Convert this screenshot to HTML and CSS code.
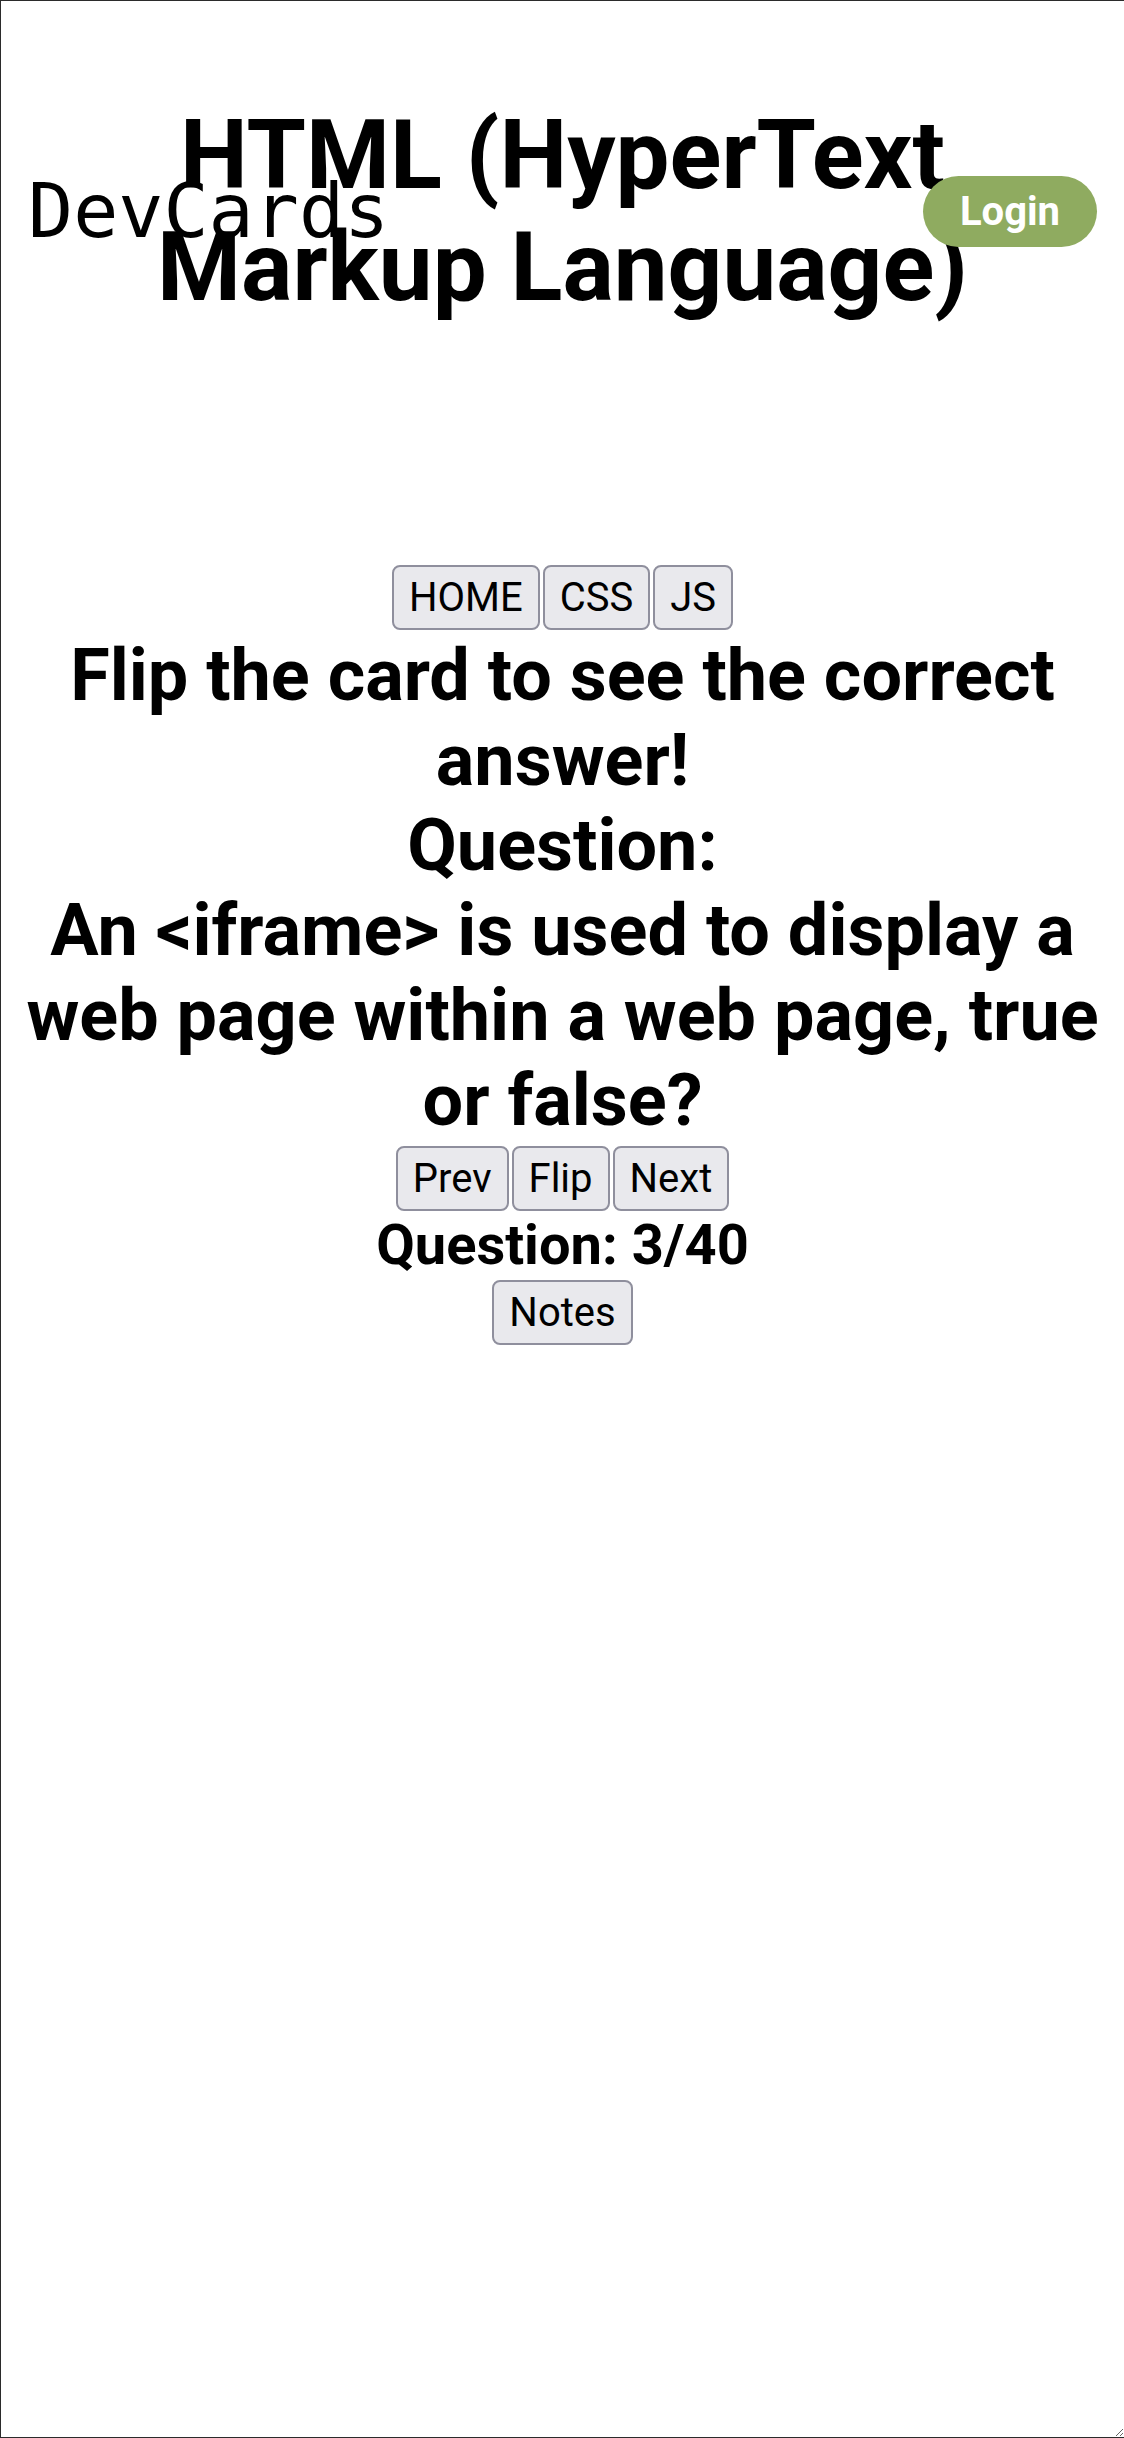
FILE: index.html
```html
<!DOCTYPE html>
<html lang="en">
<head>
<meta charset="utf-8">
<title>DevCards - HTML</title>
<link rel="stylesheet" href="styles.css">
</head>
<body>
<div class="frame">
  <header class="topbar">
    <div class="brand">DevCards</div>
    <h1 class="title">HTML (HyperText Markup Language)</h1>
    <button class="login" type="button">Login</button>
  </header>
  <main class="deck">
    <nav class="tabs">
      <button class="btn" type="button">HOME</button>
      <button class="btn" type="button">CSS</button>
      <button class="btn" type="button">JS</button>
    </nav>
    <section class="card-text">
      <h2 class="prompt">Flip the card to see the correct answer!</h2>
      <h2 class="prompt">Question:</h2>
      <h2 class="prompt">An &lt;iframe&gt; is used to display a web page within a web page, true or false?</h2>
    </section>
    <div class="controls">
      <button class="btn" type="button">Prev</button>
      <button class="btn" type="button">Flip</button>
      <button class="btn" type="button">Next</button>
    </div>
    <h3 class="counter">Question: 3/40</h3>
    <div class="controls">
      <button class="btn" type="button">Notes</button>
    </div>
  </main>
</div>
</body>
</html>
```

FILE: styles.css
```css
html, body {
  margin: 0;
  padding: 0;
  background: #ffffff;
}

body {
  font-family: Roboto, "Liberation Sans", sans-serif;
  color: #000000;
}

.frame {
  box-sizing: border-box;
  width: 1124px;
  height: 2438px;
  border: 1px solid #2b2b2b;
  border-right: none;
  overflow: auto;
  resize: both;
}

.topbar {
  display: grid;
  grid-template-columns: 1fr;
  align-items: center;
  padding: 98px 27px 0 27px;
}

.topbar > * {
  grid-row: 1;
  grid-column: 1;
}

.brand {
  justify-self: start;
  font-family: "DejaVu Sans Mono", monospace;
  font-size: 75px;
  font-weight: 400;
  line-height: normal;
}

.title {
  justify-self: center;
  max-width: 900px;
  margin: 0;
  font-size: 96px;
  font-weight: 700;
  line-height: normal;
  text-align: center;
}

.login {
  justify-self: end;
  font-family: Roboto, sans-serif;
  font-size: 40px;
  font-weight: 700;
  color: #ffffff;
  background: #8fab60;
  border: none;
  border-radius: 40px;
  padding: 12px 37px;
  line-height: normal;
}

.deck {
  display: flex;
  flex-direction: column;
  align-items: center;
  gap: 3px;
  margin-top: 242px;
  padding: 0 8px;
}

.card-text {
  display: flex;
  flex-direction: column;
  align-items: center;
}

.tabs, .controls {
  display: flex;
  justify-content: center;
  gap: 3px;
}

.btn {
  font-family: Roboto, sans-serif;
  font-size: 40px;
  line-height: normal;
  color: #000000;
  background: #e9e9ed;
  border: 2px solid #8f8f9d;
  border-radius: 8px;
  padding: 7px 15px;
}

.prompt {
  margin: 0;
  font-size: 72px;
  font-weight: 700;
  line-height: normal;
  text-align: center;
}

.counter {
  margin: 0;
  font-size: 56px;
  font-weight: 700;
  line-height: 63px;
  text-align: center;
}
```
